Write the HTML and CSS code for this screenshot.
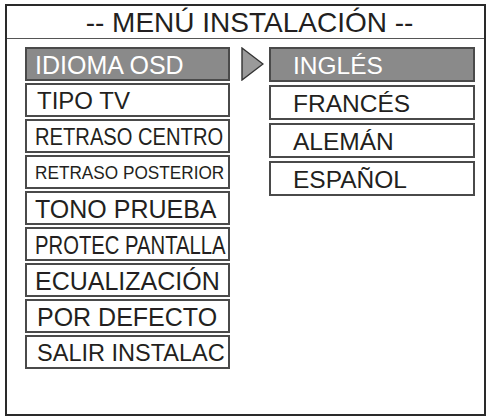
FILE: index.html
```html
<!DOCTYPE html>
<html lang="es">
<head>
<meta charset="utf-8">
<title>Menú instalación</title>
<link rel="stylesheet" href="styles.css">
</head>
<body>
<div class="frame">
  <div class="header">-- MENÚ INSTALACIÓN --</div>
  <div class="body">
    <ul class="col left">
      <li class="item sel"><span class="t t25">IDIOMA OSD</span></li>
      <li class="item"><span class="t t24 p2">TIPO TV</span></li>
      <li class="item"><span class="t tcentro">RETRASO CENTRO</span></li>
      <li class="item"><span class="t tpost">RETRASO POSTERIOR</span></li>
      <li class="item"><span class="t t25">TONO PRUEBA</span></li>
      <li class="item"><span class="t tprotec">PROTEC PANTALLA</span></li>
      <li class="item"><span class="t t25">ECUALIZACIÓN</span></li>
      <li class="item"><span class="t t25 p2">POR DEFECTO</span></li>
      <li class="item"><span class="t tsalir">SALIR INSTALAC</span></li>
    </ul>
    <div class="arrow">
      <svg width="23" height="34" viewBox="0 0 23 34"><polygon points="1,1 22,17 1,33" fill="#9a9a9a" stroke="#333" stroke-width="1.4" stroke-linejoin="miter"/></svg>
    </div>
    <ul class="col right">
      <li class="item sel"><span class="t t245">INGLÉS</span></li>
      <li class="item"><span class="t t245">FRANCÉS</span></li>
      <li class="item"><span class="t t245">ALEMÁN</span></li>
      <li class="item"><span class="t t245">ESPAÑOL</span></li>
    </ul>
  </div>
</div>
</body>
</html>
```
FILE: styles.css
```css
html, body {
  margin: 0;
  padding: 0;
  background: #fff;
}
body {
  font-family: "Liberation Sans", Arial, sans-serif;
  color: #231f20;
}
.frame {
  box-sizing: border-box;
  margin: 4px 0 0 5px;
  width: 481px;
  height: 412px;
  border: 2px solid #2a2a2a;
  display: flex;
  flex-direction: column;
}
.header {
  box-sizing: border-box;
  height: 33px;
  border-bottom: 1px solid #555;
  font-size: 28px;
  line-height: 32px;
  padding: 1px 0 0 8px;
  text-align: center;
  white-space: nowrap;
}
.body {
  display: flex;
  align-items: flex-start;
  padding: 8px 0 0 18px;
}
.col {
  list-style: none;
  margin: 0;
  padding: 0;
  display: flex;
  flex-direction: column;
}
.left {
  width: 205px;
  gap: 2px;
}
.right {
  width: 206px;
  gap: 3px;
  margin-left: 5px;
}
.item {
  box-sizing: border-box;
  height: 34px;
  border: 2px solid #4a4a4a;
  background: #fff;
  display: flex;
  align-items: center;
  padding: 2px 0 0 8px;
  overflow: hidden;
  white-space: nowrap;
}
.right .item {
  height: 35px;
  padding-left: 22px;
}
.item.sel {
  background: #8a8a8a;
  color: #fff;
}
.t {
  display: inline-block;
  transform-origin: left center;
}
.p2 { margin-left: 2px; }
.t24 { font-size: 24px; }
.t25 { font-size: 25px; }
.t245 { font-size: 24.5px; }
.tcentro { font-size: 24px; transform: scaleX(0.84); }
.tpost { font-size: 18.5px; transform: scaleX(0.93); }
.tprotec { font-size: 25px; transform: scaleX(0.81); }
.tsalir { font-size: 24px; transform: scaleX(0.98); margin-left: 2px; }
.arrow {
  margin-left: 11px;
  height: 34px;
  display: flex;
  align-items: center;
}
.arrow svg { display: block; }
```
